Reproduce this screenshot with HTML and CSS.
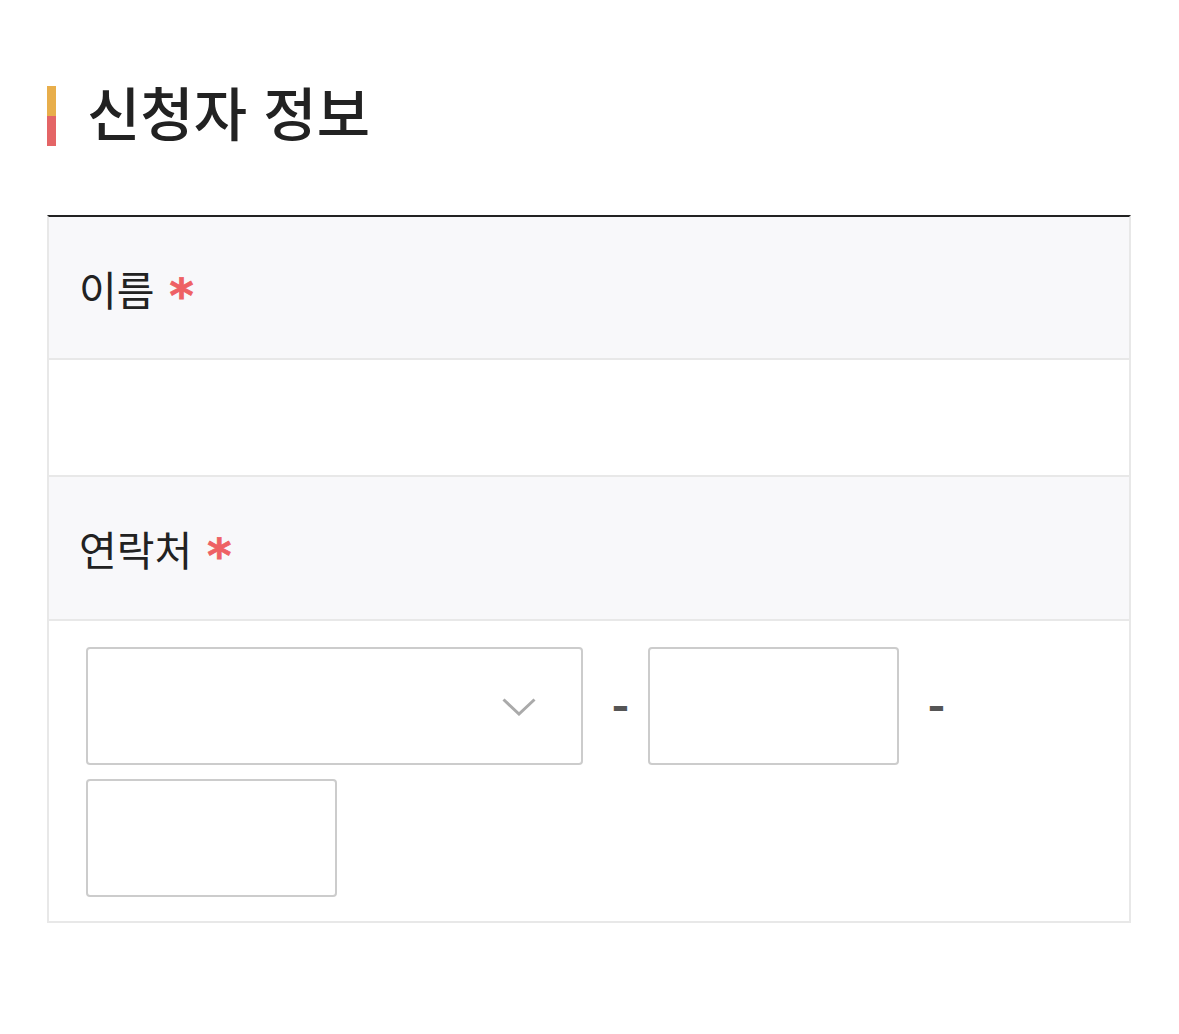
FILE: index.html
```html
<!DOCTYPE html>
<html lang="ko">
<head>
<meta charset="utf-8">
<title>신청자 정보</title>
<link rel="stylesheet" href="styles.css">
</head>
<body>
<div class="page">
  <h2 class="title"><span class="bar"></span><span class="title-text">신청자 정보</span></h2>
  <div class="table">
    <div class="th">이름<span class="req">*</span></div>
    <div class="td td-name"></div>
    <div class="th">연락처<span class="req">*</span></div>
    <div class="td td-phone">
      <div class="select">
        <svg class="chev" width="34" height="18" viewBox="0 0 34 18"><path d="M1.5 1.5 L17 16 L32.5 1.5" fill="none" stroke="#aaaaaa" stroke-width="3"/></svg>
      </div>
      <span class="sep">-</span>
      <div class="input"></div>
      <span class="sep">-</span>
      <div class="input"></div>
    </div>
  </div>
</div>
</body>
</html>
```
FILE: styles.css
```css
html, body {
  margin: 0;
  padding: 0;
  background: #ffffff;
}
body {
  font-family: "Noto Sans CJK KR", "Noto Sans", sans-serif;
  color: #222222;
}
.page {
  padding: 86px 48px 0 47px;
}
.title {
  display: flex;
  align-items: center;
  margin: 0;
  height: 60px;
  font-size: 58px;
  font-weight: 500;
  line-height: 60px;
  color: #222222;
}
.bar {
  width: 9px;
  height: 60px;
  background: linear-gradient(to bottom, #e8ae4b 0, #e8ae4b 50%, #e46566 50%, #e46566 100%);
  margin-right: 31px;
  flex: none;
}
.title-text {
  padding-bottom: 10px;
}
.table {
  margin-top: 69px;
  width: 1080px;
  border: 2px solid #e8e8e8;
  border-top: 2px solid #222222;
}
.th {
  display: flex;
  align-items: center;
  height: 141px;
  padding-left: 30px;
  background: #f8f8fa;
  font-size: 41px;
  font-weight: 400;
  color: #222222;
  border-bottom: 2px solid #e8e8e8;
}
.th:nth-of-type(3) {
  height: 142px;
}
.req {
  font-family: "DejaVu Sans", sans-serif;
  color: #ee6164;
  font-weight: 700;
  margin-left: 15px;
  font-size: 46px;
  line-height: 1;
  position: relative;
  top: 8px;
  -webkit-text-stroke: 0.8px #ee6164;
}
.td {
  background: #ffffff;
}
.td-name {
  height: 115px;
  border-bottom: 2px solid #e8e8e8;
}
.td-phone {
  display: flex;
  flex-wrap: wrap;
  align-items: center;
  row-gap: 14px;
  padding: 26px 37px 24px 37px;
}
.select {
  box-sizing: border-box;
  width: 497px;
  height: 118px;
  border: 2px solid #cccccc;
  border-radius: 4px;
  display: flex;
  align-items: center;
  justify-content: flex-end;
  padding-right: 45px;
}
.chev {
  display: block;
  margin-top: 2px;
}
.input {
  box-sizing: border-box;
  width: 251px;
  height: 118px;
  border: 2px solid #cccccc;
  border-radius: 4px;
}
.sep {
  width: 65px;
  padding-left: 10px;
  box-sizing: border-box;
  text-align: center;
  font-size: 48px;
  font-weight: 700;
  color: #555555;
  line-height: 1;
}
```
